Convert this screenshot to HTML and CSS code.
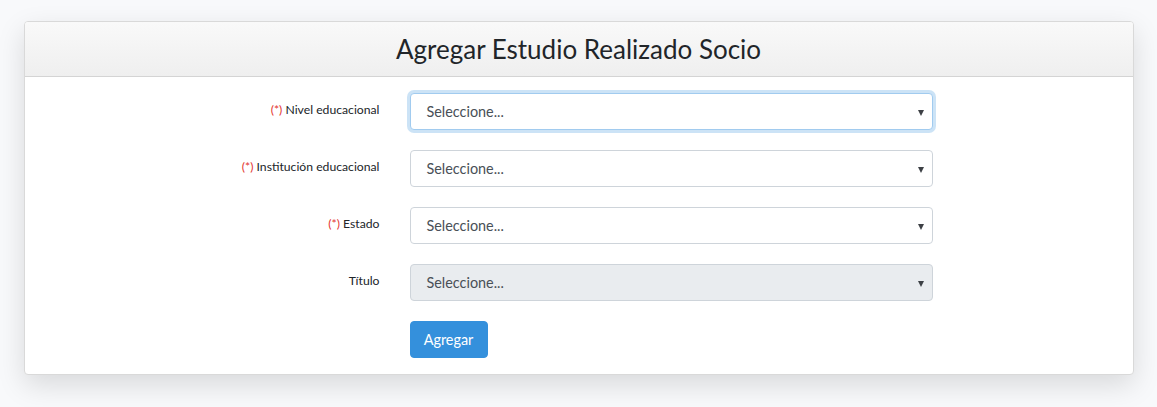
FILE: index.html
```html
<!DOCTYPE html>
<html lang="es">
<head>
<meta charset="utf-8">
<title>Agregar Estudio Realizado Socio</title>
<link rel="stylesheet" href="styles.css">
</head>
<body>
<div class="page">
  <div class="card">
    <div class="card-header">Agregar Estudio Realizado Socio</div>
    <div class="card-body">
      <div class="form-row">
        <label class="form-label"><span class="req">(*)</span> Nivel educacional</label>
        <div class="select focus"><span>Seleccione...</span><span class="caret"></span></div>
      </div>
      <div class="form-row">
        <label class="form-label"><span class="req">(*)</span> Institución educacional</label>
        <div class="select"><span>Seleccione...</span><span class="caret"></span></div>
      </div>
      <div class="form-row">
        <label class="form-label"><span class="req">(*)</span> Estado</label>
        <div class="select"><span>Seleccione...</span><span class="caret"></span></div>
      </div>
      <div class="form-row">
        <label class="form-label">Título</label>
        <div class="select disabled"><span>Seleccione...</span><span class="caret"></span></div>
      </div>
      <div class="form-row last">
        <div></div>
        <div><button class="btn">Agregar</button></div>
      </div>
    </div>
  </div>
</div>
</body>
</html>
```

FILE: styles.css
```css
html, body {
  margin: 0;
  padding: 0;
}
body {
  background: #f8f9fb;
  font-family: "Lato", "Open Sans", sans-serif;
  color: #212529;
  height: 407px;
  overflow: hidden;
}
.page {
  padding-top: 21px;
  display: flex;
  justify-content: center;
}
.card {
  width: 1108px;
  background: #fff;
  border: 1px solid #d9d9d9;
  border-radius: 4px;
  box-shadow: 0 10px 28px rgba(0, 0, 0, 0.13);
  overflow: hidden;
}
.card-header {
  height: 55px;
  box-sizing: border-box;
  border-bottom: 1px solid #d4d4d4;
  background: linear-gradient(#f9f9f9, #efefef);
  display: flex;
  align-items: center;
  justify-content: center;
  font-size: 26px;
  color: #212529;
  padding-bottom: 1px;
}
.card-body {
  padding: 16px 0 16px 0;
}
.form-row {
  display: grid;
  grid-template-columns: 355px 523px;
  column-gap: 30px;
  margin-bottom: 20px;
}
.form-row.last {
  margin-bottom: 0;
}
.form-label {
  text-align: right;
  font-size: 12.2px;
  padding-top: 9px;
  color: #212529;
}
.req {
  color: #e3342f;
}
.select {
  box-sizing: border-box;
  height: 37px;
  border: 1px solid #ced4da;
  border-radius: 4px;
  background: #fff;
  display: flex;
  align-items: center;
  justify-content: space-between;
  padding: 0 8px 0 16px;
  font-size: 14.4px;
  color: #495057;
}
.select.focus {
  border-color: #a1cbef;
  box-shadow: 0 0 0 3px rgba(52, 144, 220, 0.25);
}
.select.disabled {
  background: #e9ecef;
}
.caret {
  width: 0;
  height: 0;
  border-left: 3.5px solid transparent;
  border-right: 3.5px solid transparent;
  border-top: 6px solid #3d4045;
  margin-top: 2px;
}
.btn {
  height: 37px;
  width: 78px;
  border: 1px solid #3490dc;
  border-radius: 4px;
  background: #3490dc;
  color: #fff;
  font-family: inherit;
  font-size: 14.4px;
  padding: 0;
}
```
